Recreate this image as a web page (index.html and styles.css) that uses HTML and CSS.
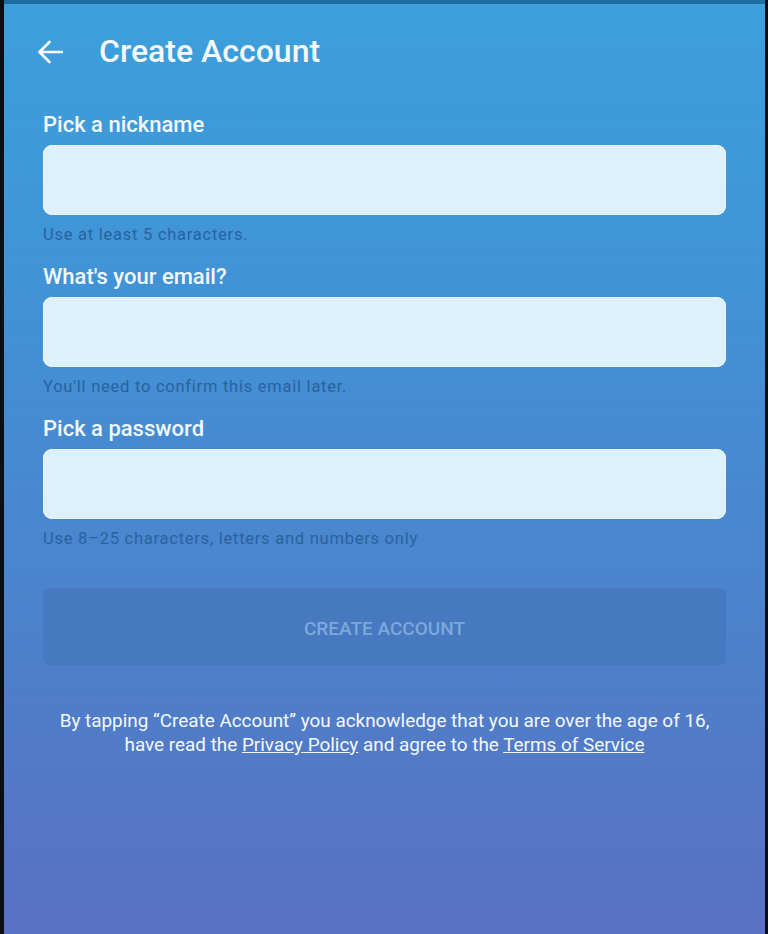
FILE: index.html
```html
<!DOCTYPE html>
<html lang="en">
<head>
<meta charset="utf-8">
<title>Create Account</title>
<link rel="stylesheet" href="styles.css">
</head>
<body>
<div class="screen">
  <div class="statusbar"></div>
  <header class="appbar">
    <svg class="back" viewBox="0 0 26 24" width="26" height="24" aria-hidden="true">
      <path d="M25 12H2.5M12.5 2L2.5 12l10 10" fill="none" stroke="#fff" stroke-width="2.6" stroke-linecap="round" stroke-linejoin="round"/>
    </svg>
    <h1 class="title">Create Account</h1>
  </header>
  <form class="form">
    <div class="field">
      <label class="label">Pick a nickname</label>
      <div class="input"></div>
      <p class="hint">Use at least 5 characters.</p>
    </div>
    <div class="field">
      <label class="label">What's your email?</label>
      <div class="input"></div>
      <p class="hint">You'll need to confirm this email later.</p>
    </div>
    <div class="field">
      <label class="label">Pick a password</label>
      <div class="input"></div>
      <p class="hint">Use 8–25 characters, letters and numbers only</p>
    </div>
    <div class="button">CREATE ACCOUNT</div>
    <p class="legal">By tapping “Create Account” you acknowledge that you are over the age of 16,<br>have read the <a>Privacy Policy</a> and agree to the <a>Terms of Service</a></p>
  </form>
</div>
</body>
</html>
```
FILE: styles.css
```css
* { box-sizing: border-box; }
html, body { margin: 0; padding: 0; background: #000; }
body { font-family: Roboto, "Noto Sans", "Liberation Sans", sans-serif; }

.screen {
  width: 768px;
  height: 934px;
  border-left: 4px solid #0b0f14;
  border-right: 3px solid #0b0f14;
  background: linear-gradient(180deg, #3ca0dc 0%, #4193d6 30%, #4a85cd 60%, #5378c6 85%, #5a70c3 100%);
  display: flex;
  flex-direction: column;
  overflow: hidden;
}

.statusbar {
  height: 4px;
  background: #1f6ea3;
  flex: none;
}

.appbar {
  display: flex;
  align-items: center;
  padding: 27px 0 0 33px;
  height: 67px;
}
.back { flex: none; margin-top: 2px; }
.title {
  margin: 0 0 0 36px;
  font-size: 32px;
  line-height: 40px;
  font-weight: 500;
  color: #f4f9fd;
}

.form {
  display: flex;
  flex-direction: column;
  padding: 42px 39px 0 39px;
}

.field {
  display: flex;
  flex-direction: column;
  margin-bottom: 20px;
}
.label {
  font-size: 22px;
  line-height: 24px;
  font-weight: 500;
  color: #f2f8fd;
  margin-bottom: 8px;
}
.input {
  height: 70px;
  border-radius: 9px;
  background: #ddf1fc;
  box-shadow: inset 0 0 0 1px #e9f6fe;
}
.hint {
  margin: 10px 0 0 0;
  font-size: 16.5px;
  line-height: 20px;
  letter-spacing: 0.75px;
  color: #2a62a0;
}

.button {
  margin-top: 19px;
  height: 77px;
  border-radius: 7px;
  background: #4679bf;
  display: flex;
  align-items: center;
  justify-content: center;
  padding-top: 3px;
  font-size: 19px;
  font-weight: 500;
  color: #7ea8dc;
}

.legal {
  margin: 44px 0 0 0;
  text-align: center;
  font-size: 18.9px;
  line-height: 24px;
  color: #f4f8fd;
}
.legal a { text-decoration: underline; color: inherit; }
```
